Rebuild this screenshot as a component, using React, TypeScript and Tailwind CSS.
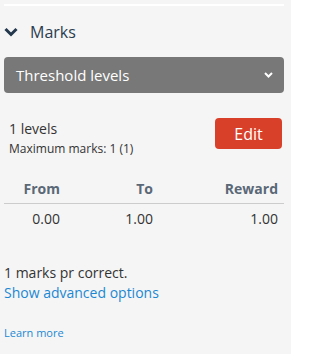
import React from "react";

export default function App() {
  return (
    <div
      className="w-[291px] h-[354px] bg-[#f5f5f5] px-[4px] pt-[4px] overflow-hidden"
      style={{ fontFamily: '"Open Sans", sans-serif' }}
    >
      <div className="h-[2px] w-[280px] bg-white" />
      <div className="mt-[14px] flex items-center h-[24px]">
        <svg width="14" height="10" viewBox="0 0 14 10">
          <path d="M1.5 2 L7 7.5 L12.5 2" fill="none" stroke="#23384d" strokeWidth="3" />
        </svg>
        <span className="ml-[12px] text-[16px] text-[#2b3d4f] leading-none">Marks</span>
      </div>
      <div className="mt-[13px] w-[280px] h-[36px] rounded-[4px] bg-[#787878] flex items-center justify-between pl-[12px] pr-[11px]">
        <span className="text-white text-[15px]">Threshold levels</span>
        <svg width="9" height="6" viewBox="0 0 9 6">
          <path d="M1 1 L4.5 4.5 L8 1" fill="none" stroke="#ffffff" strokeWidth="2" />
        </svg>
      </div>
      <div className="mt-[25px] flex justify-between items-start pl-[5px] pr-[5px]">
        <div className="flex flex-col">
          <span className="text-[14px] text-[#333333] leading-[19px] mt-[1px]">1 levels</span>
          <span className="text-[12px] text-[#333333] leading-[16px] mt-[3px]">Maximum marks: 1 (1)</span>
        </div>
        <button className="w-[67px] h-[31px] rounded-[4px] bg-[#d9402a] text-white text-[16px] flex items-center justify-center">
          Edit
        </button>
      </div>
      <div className="mt-[17px] w-[280px]">
        <div className="grid grid-cols-[62px_93px_125px] border-b border-[#cccccc] h-[30px] items-center text-[14px] font-bold text-[#5a6877]">
          <span className="text-right pr-[6px]">From</span>
          <span className="text-right pr-[6px]">To</span>
          <span className="text-right pr-[6px]">Reward</span>
        </div>
        <div className="grid grid-cols-[62px_93px_125px] h-[29px] items-center text-[14px] text-[#333333]">
          <span className="text-right pr-[6px]">0.00</span>
          <span className="text-right pr-[6px]">1.00</span>
          <span className="text-right pr-[6px]">1.00</span>
        </div>
      </div>
      <div className="mt-[30px] text-[14px] text-[#333333] leading-[20px]">1 marks pr correct.</div>
      <div className="text-[14px] text-[#1b88d3] leading-[20px]">Show advanced options</div>
      <div className="mt-[22px] text-[11px] text-[#1b88d3] leading-[16px]">Learn more</div>
    </div>
  );
}
